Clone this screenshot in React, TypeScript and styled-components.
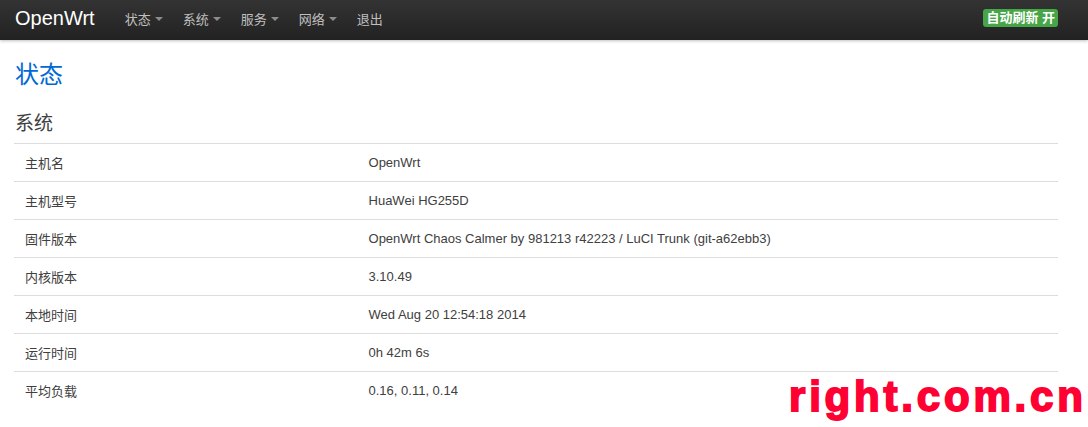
import React from "react";
import styled, { createGlobalStyle } from "styled-components";

const Global = createGlobalStyle`
  html, body { margin: 0; padding: 0; background: #fff; }
  body {
    font-family: "Liberation Sans", Arial, "Noto Sans CJK SC", sans-serif;
    font-size: 13px;
    color: #404040;
  }
`;

const Page = styled.div`
  position: relative;
  width: 1088px;
  height: 427px;
  overflow: hidden;
`;

const Topbar = styled.header`
  height: 40px;
  box-sizing: border-box;
  background: linear-gradient(to bottom, #333333, #222222);
  box-shadow: 0 1px 3px rgba(0, 0, 0, 0.25);
  display: flex;
  align-items: center;
  padding: 0 30px 4px 15px;
`;

const Brand = styled.a`
  color: #ffffff;
  font-size: 20px;
  line-height: 36px;
  margin-right: 20px;
  text-decoration: none;
`;

const Nav = styled.nav`
  display: flex;
  flex: 1;
`;

const NavItem = styled.a`
  display: flex;
  align-items: center;
  padding: 0 10px;
  height: 36px;
  color: #bfbfbf;
  font-size: 13px;
  text-decoration: none;
`;

const Caret = styled.span`
  display: inline-block;
  width: 0;
  height: 0;
  margin-left: 4px;
  margin-top: 1px;
  border-left: 4px solid transparent;
  border-right: 4px solid transparent;
  border-top: 4px solid #8c8c8c;
`;

const Badge = styled.span`
  background: #46a546;
  color: #ffffff;
  font-weight: bold;
  font-size: 13px;
  line-height: 18px;
  padding: 0 3px;
  border-radius: 3px;
  white-space: pre;
`;

const Main = styled.main`
  padding: 17px 30px 0 14px;
`;

const Title = styled.h2`
  margin: 0 0 0 1px;
  font-size: 24px;
  line-height: 36px;
  font-weight: normal;
  color: #0069d6;
`;

const Section = styled.h3`
  margin: 17px 0 0 1px;
  font-size: 19px;
  line-height: 27px;
  font-weight: normal;
  color: #404040;
`;

const Table = styled.table`
  margin-top: 6px;
  width: 100%;
  border-collapse: collapse;
`;

const Row = styled.tr`
  border-top: 1px solid #dddddd;
`;

const Cell = styled.td<{ $label?: boolean }>`
  height: 38px;
  padding: 0 10px;
  box-sizing: border-box;
  font-size: 13px;
  color: #404040;
  vertical-align: middle;
  width: ${(p) => (p.$label ? "33%" : "auto")};
  padding-left: ${(p) => (p.$label ? "11px" : "10px")};
`;

const Watermark = styled.div`
  position: absolute;
  left: 789px;
  top: 372px;
  font-family: "Liberation Sans", Arial, sans-serif;
  font-weight: bold;
  font-size: 42px;
  line-height: 50px;
  letter-spacing: 3.8px;
  color: #ff0033;
  -webkit-text-stroke: 1.8px #ff0033;
  white-space: nowrap;
`;

const rows: [string, string][] = [
  ["主机名", "OpenWrt"],
  ["主机型号", "HuaWei HG255D"],
  ["固件版本", "OpenWrt Chaos Calmer by 981213 r42223 / LuCI Trunk (git-a62ebb3)"],
  ["内核版本", "3.10.49"],
  ["本地时间", "Wed Aug 20 12:54:18 2014"],
  ["运行时间", "0h 42m 6s"],
  ["平均负载", "0.16, 0.11, 0.14"],
];

const menu = [
  { label: "状态", caret: true },
  { label: "系统", caret: true },
  { label: "服务", caret: true },
  { label: "网络", caret: true },
  { label: "退出", caret: false },
];

export default function App() {
  return (
    <Page>
      <Global />
      <Topbar>
        <Brand href="#">OpenWrt</Brand>
        <Nav>
          {menu.map((m) => (
            <NavItem key={m.label} href="#">
              {m.label}
              {m.caret && <Caret />}
            </NavItem>
          ))}
        </Nav>
        <Badge>自动刷新 开</Badge>
      </Topbar>
      <Main>
        <Title>状态</Title>
        <Section>系统</Section>
        <Table>
          <tbody>
            {rows.map(([k, v]) => (
              <Row key={k}>
                <Cell $label>{k}</Cell>
                <Cell>{v}</Cell>
              </Row>
            ))}
          </tbody>
        </Table>
      </Main>
      <Watermark>right.com.cn</Watermark>
    </Page>
  );
}
